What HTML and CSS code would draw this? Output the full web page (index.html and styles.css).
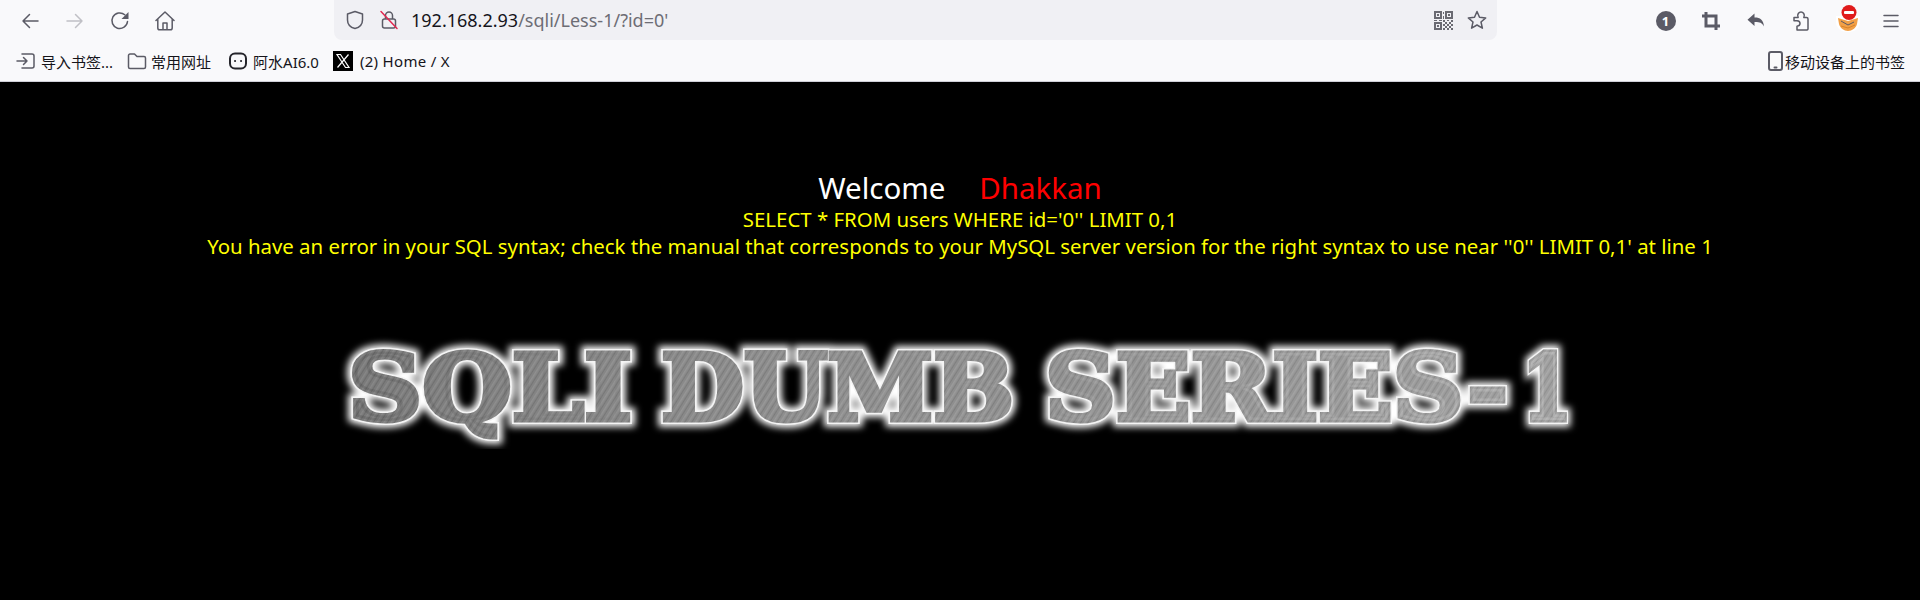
FILE: index.html
```html
<!DOCTYPE html>
<html lang="en">
<head>
    <meta charset="UTF-8">
    <meta name="viewport" content="width=device-width, initial-scale=1.0">
    <title>Less-1 **Error Based- String**</title>
    <link rel="stylesheet" href="styles.css">
</head>
<body>
    <div class="toolbar">
        <div class="nav-group">
            <div class="cell">
                <svg class="icon" viewBox="0 0 20 20"><path d="M18 10H3M9.500 3.500 3 10l6.500 6.500"/></svg>
            </div>
            <div class="cell">
                <svg class="icon faded" viewBox="0 0 20 20"><path d="M2 10h15M10.500 3.500 17 10l-6.500 6.500"/></svg>
            </div>
            <div class="cell">
                <svg class="icon" viewBox="0 0 20 20"><path d="M17.500 10.500A7.800 7.800 0 1 1 14.800 3.800"/><path class="solid" d="M18.500 1v7h-7z"/></svg>
            </div>
            <div class="cell">
                <svg class="icon" viewBox="0 0 20 20"><path d="M1 9.500 10 1l9 8.500M2.800 8v9a1.800 1.800 0 0 0 1.800 1.800h10.800a1.800 1.800 0 0 0 1.800-1.800V8M8 18.800V12h4v6.800"/></svg>
            </div>
        </div>

        <div class="urlbar">
            <svg class="icon shield" viewBox="0 0 20 20"><path d="M10 1.500 2.500 4v6c0 4.500 3.500 7.500 7.500 8.500 4-1 7.500-4 7.500-8.500V4z"/></svg>
            <svg class="icon lock" viewBox="0 0 20 20"><path d="M6.500 9V5.500a3.500 3.500 0 0 1 7 0V9M3.500 11c0-1 1-2 2-2h9c1 0 2 1 2 2v5c0 1-1 2-2 2h-9c-1 0-2-1-2-2z"/><path class="slash" d="M2 1.500 18 18.500"/></svg>
            <div class="url"><span class="host">192.168.2.93</span>/sqli/Less-1/?id=0'</div>
            <svg class="qr" viewBox="0 0 19 19">
                <path d="M0 0h8v8H0zM2 2v4h4V2zM11 0h8v8h-8zM13 2v4h4V2zM0 11h8v8H0zM2 13v4h4v-4z" fill-rule="evenodd"/>
                <path d="M3 3h2v2H3zM14 3h2v2h-2zM3 14h2v2H3zM9 1h1v2H9zM9 5h1v3H9zM0 9h3v1H0zM5 9h3v1H5zM9 9h2v2H9zM13 9h2v1h-2zM17 9h2v2h-2zM11 11h2v2h-2zM15 11h2v2h-2zM9 13h2v2H9zM13 13h2v2h-2zM17 13h2v2h-2zM11 15h2v2h-2zM15 15h2v2h-2zM9 17h2v2H9zM13 17h2v2h-2zM17 17h2v2h-2z"/>
            </svg>
            <svg class="icon star" viewBox="0 0 20 20"><path d="M10 1.500 12.500 7.300 18.700 7.900 14 12 15.400 18.200 10 15 4.600 18.200 6 12 1.300 7.900 7.500 7.300z"/></svg>
        </div>

        <div class="action-group">
            <div class="cell">
                <div class="count-badge">1</div>
            </div>
            <div class="cell">
                <svg class="icon heavy" viewBox="0 0 20 20"><path d="M5 1v14h14M1 5h14v14"/></svg>
            </div>
            <div class="cell">
                <svg class="icon" viewBox="0 0 20 20"><path class="solid" d="M8.500 2.500v4c5-.2 9 2 9.500 9-2-3.800-4.500-4.500-9.500-4.400v4L1.500 8.800z"/></svg>
            </div>
            <div class="cell">
                <svg class="icon" viewBox="0 0 20 20"><path d="M3 6.500h4.200c-1.700-3.500 1-5.500 2.800-5.500s4.500 2 2.800 5.500h2.700a1.500 1.500 0 0 1 1.500 1.500v10a1.500 1.500 0 0 1-1 1H6v-3.800c2-.2 3-1.200 3-2.700s-1-2.500-3-2.700H3z"/></svg>
            </div>
            <div class="cell fox-cell">
                <svg class="fox" viewBox="0 0 26 28">
                    <path d="M1 11h24v6c0 6-5 10-12 10S1 23 1 17z" fill="#ffffff"/>
                    <path d="M3 13l10 3 10-3-1 6c-1 4-5 7-9 7s-8-3-9-7z" fill="#f2a047"/>
                    <path d="M6 16l7 4 6-3" fill="none" stroke="#5b5b66"/>
                    <path d="M6 21l7 2 7-3" fill="none" stroke="#d98226"/>
                    <circle cx="14" cy="7.500" r="7.500" fill="#e01b1b"/>
                    <rect x="9" y="6" width="10" height="3" rx="1" fill="#fff"/>
                </svg>
            </div>
            <div class="cell">
                <svg class="icon" viewBox="0 0 20 20"><path d="M3 4.500h14M3 10h14M3 15.500h14"/></svg>
            </div>
        </div>
    </div>

    <div class="bookmarks">
        <div class="bookmark import-mark">
            <svg class="icon small" viewBox="0 0 20 20"><path d="M1 10h10M7.500 6.500 11 10l-3.500 3.500M6 3h10a2 2 0 0 1 2 2v10a2 2 0 0 1-2 2H6"/></svg>
            <span>导入书签...</span>
        </div>
        <div class="bookmark folder-mark">
            <svg class="icon small" viewBox="0 0 20 20"><path d="M1.500 4.500A1.500 1.500 0 0 1 3 3h4.500l2.500 2.500h7A1.500 1.500 0 0 1 18.500 7v9a1.500 1.500 0 0 1-1.500 1.500H3A1.500 1.500 0 0 1 1.500 16z"/></svg>
            <span>常用网址</span>
        </div>
        <div class="bookmark ai-mark">
            <svg class="icon small dark" viewBox="0 0 20 20"><rect x="2" y="2.500" width="16" height="15" rx="5"/><path d="M7 10h.1M13 10h.1"/></svg>
            <span>阿水AI6.0</span>
        </div>
        <div class="bookmark x-mark">
            <svg class="x-logo" viewBox="0 0 20 20"><rect width="20" height="20"/><path d="M4 3.500h3.500L16 16.500h-3.500zM15.500 3.500 4.500 16.500"/></svg>
            <span>(2) Home / X</span>
        </div>
        <div class="bookmark mobile-mark">
            <svg class="icon phone" viewBox="0 0 15 20"><rect x="1" y="1" width="13" height="18" rx="2"/><path d="M6.500 16.500h2"/></svg>
            <span>移动设备上的书签</span>
        </div>
    </div>

    <div class="content">
        <div class="welcome">Welcome <span class="name">Dhakkan</span></div>
        <div class="sql-text">SELECT * FROM users WHERE id='0'' LIMIT 0,1</div>
        <div class="sql-text">You have an error in your SQL syntax; check the manual that corresponds to your MySQL server version for the right syntax to use near ''0'' LIMIT 0,1' at line 1</div>

        <svg class="banner" viewBox="0 0 1300 130">
            <defs>
                <pattern id="hatch" width="6" height="6" patternUnits="userSpaceOnUse" patternTransform="rotate(32)">
                    <rect width="6" height="6" fill="#8a8a8a"/>
                    <rect width="1" height="6" fill="#7a7a7a"/>
                    <rect x="3" width="1.500" height="6" fill="#989898"/>
                </pattern>
                <linearGradient id="shade" x1="0" x2="1" y1="0" y2="0">
                    <stop offset="0" stop-color="#000" stop-opacity=".12"/>
                    <stop offset=".55" stop-color="#fff" stop-opacity=".04"/>
                    <stop offset="1" stop-color="#fff" stop-opacity=".18"/>
                </linearGradient>
                <text id="bannerText" y="101">
                    <tspan x="38" textLength="284" lengthAdjust="spacingAndGlyphs">SQLI</tspan>
                    <tspan x="351" textLength="353" lengthAdjust="spacingAndGlyphs">DUMB</tspan>
                    <tspan x="735" textLength="463" lengthAdjust="spacingAndGlyphs">SERIES-</tspan>
                    <tspan x="1212" textLength="50" lengthAdjust="spacingAndGlyphs">1</tspan>
                </text>
            </defs>
            <use href="#bannerText" class="glow"/>
            <use href="#bannerText" class="edge"/>
            <use href="#bannerText" class="face"/>
            <use href="#bannerText" class="tint"/>
        </svg>
    </div>
</body>
</html>
```

FILE: styles.css
```css
* {
    box-sizing: border-box;
}

body {
    margin: 0;
    height: 600px;
    overflow: hidden;
    background-color: #000000;
    font-family: "Noto Sans", "Noto Sans CJK SC", sans-serif;
}

/* Browser top rows */
.toolbar {
    display: flex;
    height: 41px;
    padding: 0 7px;
    background-color: #f9f9fb;
}

.nav-group {
    display: flex;
    width: 327px;
}

.nav-group .cell {
    width: 45px;
}

.action-group {
    display: flex;
    margin-left: auto;
}

.action-group .cell {
    width: 45px;
}

.cell {
    display: flex;
    justify-content: center;
    align-items: center;
}

.icon {
    width: 20px;
    height: 20px;
    fill: none;
    stroke: #5b5b66;
    stroke-width: 1.500;
    stroke-linejoin: round;
    stroke-linecap: round;
}

.icon .solid {
    fill: #5b5b66;
    stroke: none;
}

.faded {
    stroke: #c0c0c6;
}

.heavy {
    stroke-width: 3;
    stroke-linecap: butt;
    stroke-linejoin: miter;
}

.urlbar {
    display: flex;
    align-items: center;
    width: 1163px;
    height: 40px;
    padding: 0 10px 0 11px;
    background-color: #f0f0f4;
    border-radius: 0 0 8px 8px;
}

.shield {
    flex: none;
}

.lock {
    flex: none;
    margin-left: 14px;
}

.lock .slash {
    stroke: #e22850;
}

.url {
    margin-left: 12px;
    font-size: 18px;
    color: #6d6d75;
}

.host {
    color: #15141a;
}

.qr {
    width: 19px;
    height: 19px;
    margin-left: auto;
    fill: #6a6a72;
}

.star {
    margin-left: 14px;
}

.count-badge {
    width: 20px;
    height: 20px;
    border-radius: 50%;
    background-color: #5b5b66;
    color: #ffffff;
    font-size: 13px;
    font-weight: 700;
    line-height: 20px;
    text-align: center;
}

.fox-cell {
    padding-left: 4px;
}

.fox {
    width: 26px;
    height: 28px;
    margin-top: -4px;
}

.bookmarks {
    display: flex;
    align-items: center;
    height: 41px;
    background-color: #f9f9fb;
    border-bottom: 1px solid #cfcfd8;
    font-size: 15px;
    color: #15141a;
}

.bookmark {
    display: flex;
    align-items: center;
    white-space: nowrap;
}

.small {
    width: 20px;
    height: 20px;
}

.dark {
    stroke: #25252b;
    stroke-width: 2;
}

.import-mark {
    margin-left: 16px;
    gap: 5px;
}

.folder-mark {
    margin-left: 14px;
    gap: 4px;
}

.ai-mark {
    margin-left: 17px;
    gap: 5px;
}

.x-mark {
    margin-left: 14px;
    gap: 7px;
}

.x-mark span {
    letter-spacing: .3px;
}

.x-logo {
    width: 20px;
    height: 20px;
    fill: #000000;
}

.x-logo path {
    fill: none;
    stroke: #ffffff;
    stroke-width: 1.200;
}

.mobile-mark {
    margin-left: auto;
    margin-right: 15px;
    gap: 2px;
}

.phone {
    width: 15px;
    height: 20px;
    stroke-width: 2;
}

/* Page body */
.content {
    padding-top: 87px;
    text-align: center;
}

.welcome {
    font-size: 29.500px;
    line-height: 37px;
    color: #ffffff;
    white-space: pre-wrap;
    word-spacing: 26px;
}

.name {
    color: #ff0000;
}

.sql-text {
    font-size: 20.400px;
    line-height: 27px;
    color: #ffff00;
}

.banner {
    display: block;
    width: 1300px;
    height: 130px;
    margin: 59px auto 0 auto;
}

.banner text {
    font-family: "DejaVu Serif", serif;
    font-size: 92px;
    font-weight: 700;
}

.glow {
    fill: none;
    stroke: #ffffff;
    stroke-width: 14;
    filter: blur(3.500px);
}

.edge {
    fill: none;
    stroke: #f4f4f4;
    stroke-width: 8;
    filter: blur(.6px);
}

.face {
    fill: url(#hatch);
    stroke: url(#hatch);
    stroke-width: 5;
}

.tint {
    fill: url(#shade);
    stroke: url(#shade);
    stroke-width: 5;
}
```
